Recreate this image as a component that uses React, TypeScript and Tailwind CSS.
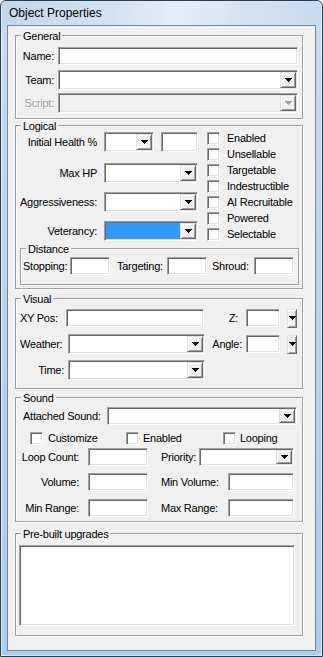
import React from 'react'

const sunken =
  'border border-t-[#a0a0a0] border-l-[#a0a0a0] border-b-white border-r-white shadow-[inset_1px_1px_0_#696969,inset_-1px_-1px_0_#e3e3e3]'
const raised =
  'border border-t-[#e3e3e3] border-l-[#e3e3e3] border-b-[#696969] border-r-[#696969] bg-[#f0f0f0] shadow-[inset_1px_1px_0_#fff,inset_-1px_-1px_0_#a0a0a0]'

function Arrow({ disabled }: { disabled?: boolean }) {
  return (
    <svg width="7" height="4" viewBox="0 0 7 4" shapeRendering="crispEdges">
      <path
        d="M0 0h7v1H0z M1 1h5v1H1z M2 2h3v1H2z M3 3h1v1H3z"
        fill={disabled ? '#a0a0a0' : '#000'}
      />
    </svg>
  )
}

function DropButton({ className = '', disabled }: { className?: string; disabled?: boolean }) {
  return (
    <div className={`${raised} flex items-center justify-center ${className}`}>
      <Arrow disabled={disabled} />
    </div>
  )
}

function Edit({ className = '' }: { className?: string }) {
  return <div className={`${sunken} bg-white ${className}`} />
}

function Combo({
  className = '',
  disabled,
  selected,
}: {
  className?: string
  disabled?: boolean
  selected?: boolean
}) {
  return (
    <div className={`${sunken} flex p-[1px] ${disabled ? 'bg-[#f0f0f0]' : 'bg-white'} ${className}`}>
      <div className={`flex-1 ${selected ? 'bg-[#3399ff]' : ''}`} />
      <DropButton className="w-[16px]" disabled={disabled} />
    </div>
  )
}

function Check() {
  return <div className={`${sunken} h-[13px] w-[13px] shrink-0 bg-white`} />
}

function GroupBox({
  title,
  className = '',
  children,
}: {
  title: string
  className?: string
  children?: React.ReactNode
}) {
  return (
    <div
      className={`flex flex-col border border-[#a0a0a0] shadow-[inset_1px_1px_0_#fff,1px_1px_0_#fff] ${className}`}
    >
      <span className="-mt-[6px] ml-[5px] self-start bg-[#f0f0f0] px-[2px] leading-[12px]">
        {title}
      </span>
      {children}
    </div>
  )
}

const flags = [
  'Enabled',
  'Unsellable',
  'Targetable',
  'Indestructible',
  'AI Recruitable',
  'Powered',
  'Selectable',
]

export default function App() {
  return (
    <div className="h-[657px] w-[323px] bg-white font-['Liberation_Sans',Arial,sans-serif] text-[11px] leading-[13px] tracking-[-0.25px] text-black">
      <div className="flex h-full flex-col rounded-t-[6px] border border-[#2c3f52] bg-[linear-gradient(180deg,#cadcef_0%,#b9d1ea_50%,#a9cdec_100%)] px-[6px] pb-[5px] shadow-[inset_1px_1px_0_rgba(255,255,255,0.6),inset_-1px_-1px_0_rgba(255,255,255,0.6)]">
        <div className="-mx-[5px] flex h-[24px] items-center rounded-t-[5px] bg-[linear-gradient(100deg,#c2d7ed_0%,#d3e2f2_35%,#e6eef8_55%,#d4e3f2_75%,#c6daee_100%)] pl-[7px] pt-[1px] text-[12px] tracking-normal">
          Object Properties
        </div>
        <div className="flex h-[626px] flex-col border border-[#7088a0] bg-[#f0f0f0]">
          {/* General */}
          <GroupBox title="General" className="ml-[7px] mt-[9px] h-[84px] w-[288px]">
            <div className="mt-[5px] flex h-[18px] items-center">
              <span className="w-[38px] text-right">Name:</span>
              <Edit className="ml-[4px] h-[18px] w-[240px]" />
            </div>
            <div className="mt-[5px] flex h-[20px] items-center">
              <span className="w-[38px] text-right">Team:</span>
              <Combo className="ml-[4px] h-[20px] w-[240px]" />
            </div>
            <div className="mt-[3px] flex h-[20px] items-center">
              <span className="w-[38px] text-right text-[#a0a0a0] [text-shadow:1px_1px_0_#fff]">
                Script:
              </span>
              <Combo disabled className="ml-[4px] h-[20px] w-[240px]" />
            </div>
          </GroupBox>

          {/* Logical */}
          <GroupBox title="Logical" className="ml-[7px] mt-[6px] h-[164px] w-[288px]">
            <div className="flex">
              <div className="flex w-[182px] flex-col">
                <div className="flex h-[20px] items-center">
                  <span className="w-[81px] text-right">Initial Health %</span>
                  <Combo className="ml-[7px] h-[20px] w-[50px]" />
                  <Edit className="ml-[7px] h-[20px] w-[37px]" />
                </div>
                <div className="mt-[11px] flex h-[20px] items-center">
                  <span className="w-[81px] text-right">Max HP</span>
                  <Combo className="ml-[7px] h-[20px] w-[94px]" />
                </div>
                <div className="mt-[9px] flex h-[20px] items-center">
                  <span className="w-[81px] text-right">Aggressiveness:</span>
                  <Combo className="ml-[7px] h-[20px] w-[94px]" />
                </div>
                <div className="mt-[9px] flex h-[20px] items-center">
                  <span className="w-[81px] text-right">Veterancy:</span>
                  <Combo selected className="ml-[7px] h-[20px] w-[94px]" />
                </div>
              </div>
              <div className="ml-[9px] flex flex-col">
                {flags.map((f) => (
                  <div key={f} className="flex h-[16px] items-start">
                    <Check />
                    <span className="ml-[7px] whitespace-nowrap">{f}</span>
                  </div>
                ))}
              </div>
            </div>
            <GroupBox title="Distance" className="ml-[4px] mt-[4px] h-[37px] w-[279px]">
              <div className="mt-[2px] flex h-[18px] items-center">
                <span className="ml-[2px] w-[47px]">Stopping:</span>
                <Edit className="h-[18px] w-[40px]" />
                <span className="ml-[7px] w-[50px]">Targeting:</span>
                <Edit className="h-[18px] w-[40px]" />
                <span className="ml-[5px] w-[42px]">Shroud:</span>
                <Edit className="h-[18px] w-[40px]" />
              </div>
            </GroupBox>
          </GroupBox>

          {/* Visual */}
          <GroupBox title="Visual" className="ml-[7px] mt-[9px] h-[91px] w-[288px]">
            <div className="mt-[4px] flex h-[18px] items-center">
              <span className="w-[50px] pl-[4px]">XY Pos:</span>
              <Edit className="h-[18px] w-[138px]" />
              <span className="w-[34px] text-right">Z:</span>
              <Edit className="ml-[8px] h-[18px] w-[34px]" />
              <DropButton className="ml-[7px] h-[19px] w-[10px]" />
            </div>
            <div className="mt-[7px] flex h-[20px] items-center">
              <span className="w-[52px] pl-[4px]">Weather:</span>
              <Combo className="h-[20px] w-[137px]" />
              <span className="w-[37px] text-right">Angle:</span>
              <Edit className="ml-[4px] h-[18px] w-[34px]" />
              <DropButton className="ml-[7px] h-[19px] w-[10px]" />
            </div>
            <div className="mt-[6px] flex h-[20px] items-center">
              <span className="w-[48px] text-right">Time:</span>
              <Combo className="ml-[4px] h-[20px] w-[137px]" />
            </div>
          </GroupBox>

          {/* Sound */}
          <GroupBox title="Sound" className="ml-[7px] mt-[8px] h-[125px] w-[288px]">
            <div className="mt-[3px] flex h-[18px] items-center">
              <span className="w-[91px] pl-[7px]">Attached Sound:</span>
              <Combo className="h-[18px] w-[190px]" />
            </div>
            <div className="mt-[7px] flex h-[13px] items-center pl-[14px]">
              <div className="flex w-[96px] items-center">
                <Check />
                <span className="ml-[5px]">Customize</span>
              </div>
              <div className="flex w-[97px] items-center">
                <Check />
                <span className="ml-[4px]">Enabled</span>
              </div>
              <div className="flex items-center">
                <Check />
                <span className="ml-[4px]">Looping</span>
              </div>
            </div>
            <div className="mt-[3px] flex h-[18px] items-center">
              <span className="w-[63px] text-right">Loop Count:</span>
              <Edit className="ml-[9px] h-[18px] w-[60px]" />
              <span className="ml-[13px] w-[38px]">Priority:</span>
              <Combo className="h-[18px] w-[95px]" />
            </div>
            <div className="mt-[7px] flex h-[18px] items-center">
              <span className="w-[63px] text-right">Volume:</span>
              <Edit className="ml-[9px] h-[18px] w-[60px]" />
              <span className="ml-[13px] w-[67px]">Min Volume:</span>
              <Edit className="h-[18px] w-[66px]" />
            </div>
            <div className="mt-[8px] flex h-[18px] items-center">
              <span className="w-[63px] text-right">Min Range:</span>
              <Edit className="ml-[9px] h-[18px] w-[60px]" />
              <span className="ml-[13px] w-[67px]">Max Range:</span>
              <Edit className="h-[18px] w-[66px]" />
            </div>
          </GroupBox>

          {/* Pre-built upgrades */}
          <GroupBox title="Pre-built upgrades" className="ml-[7px] mt-[11px] h-[103px] w-[288px]">
            <Edit className="ml-[3px] mt-[5px] h-[81px] w-[276px]" />
          </GroupBox>
        </div>
      </div>
    </div>
  )
}
